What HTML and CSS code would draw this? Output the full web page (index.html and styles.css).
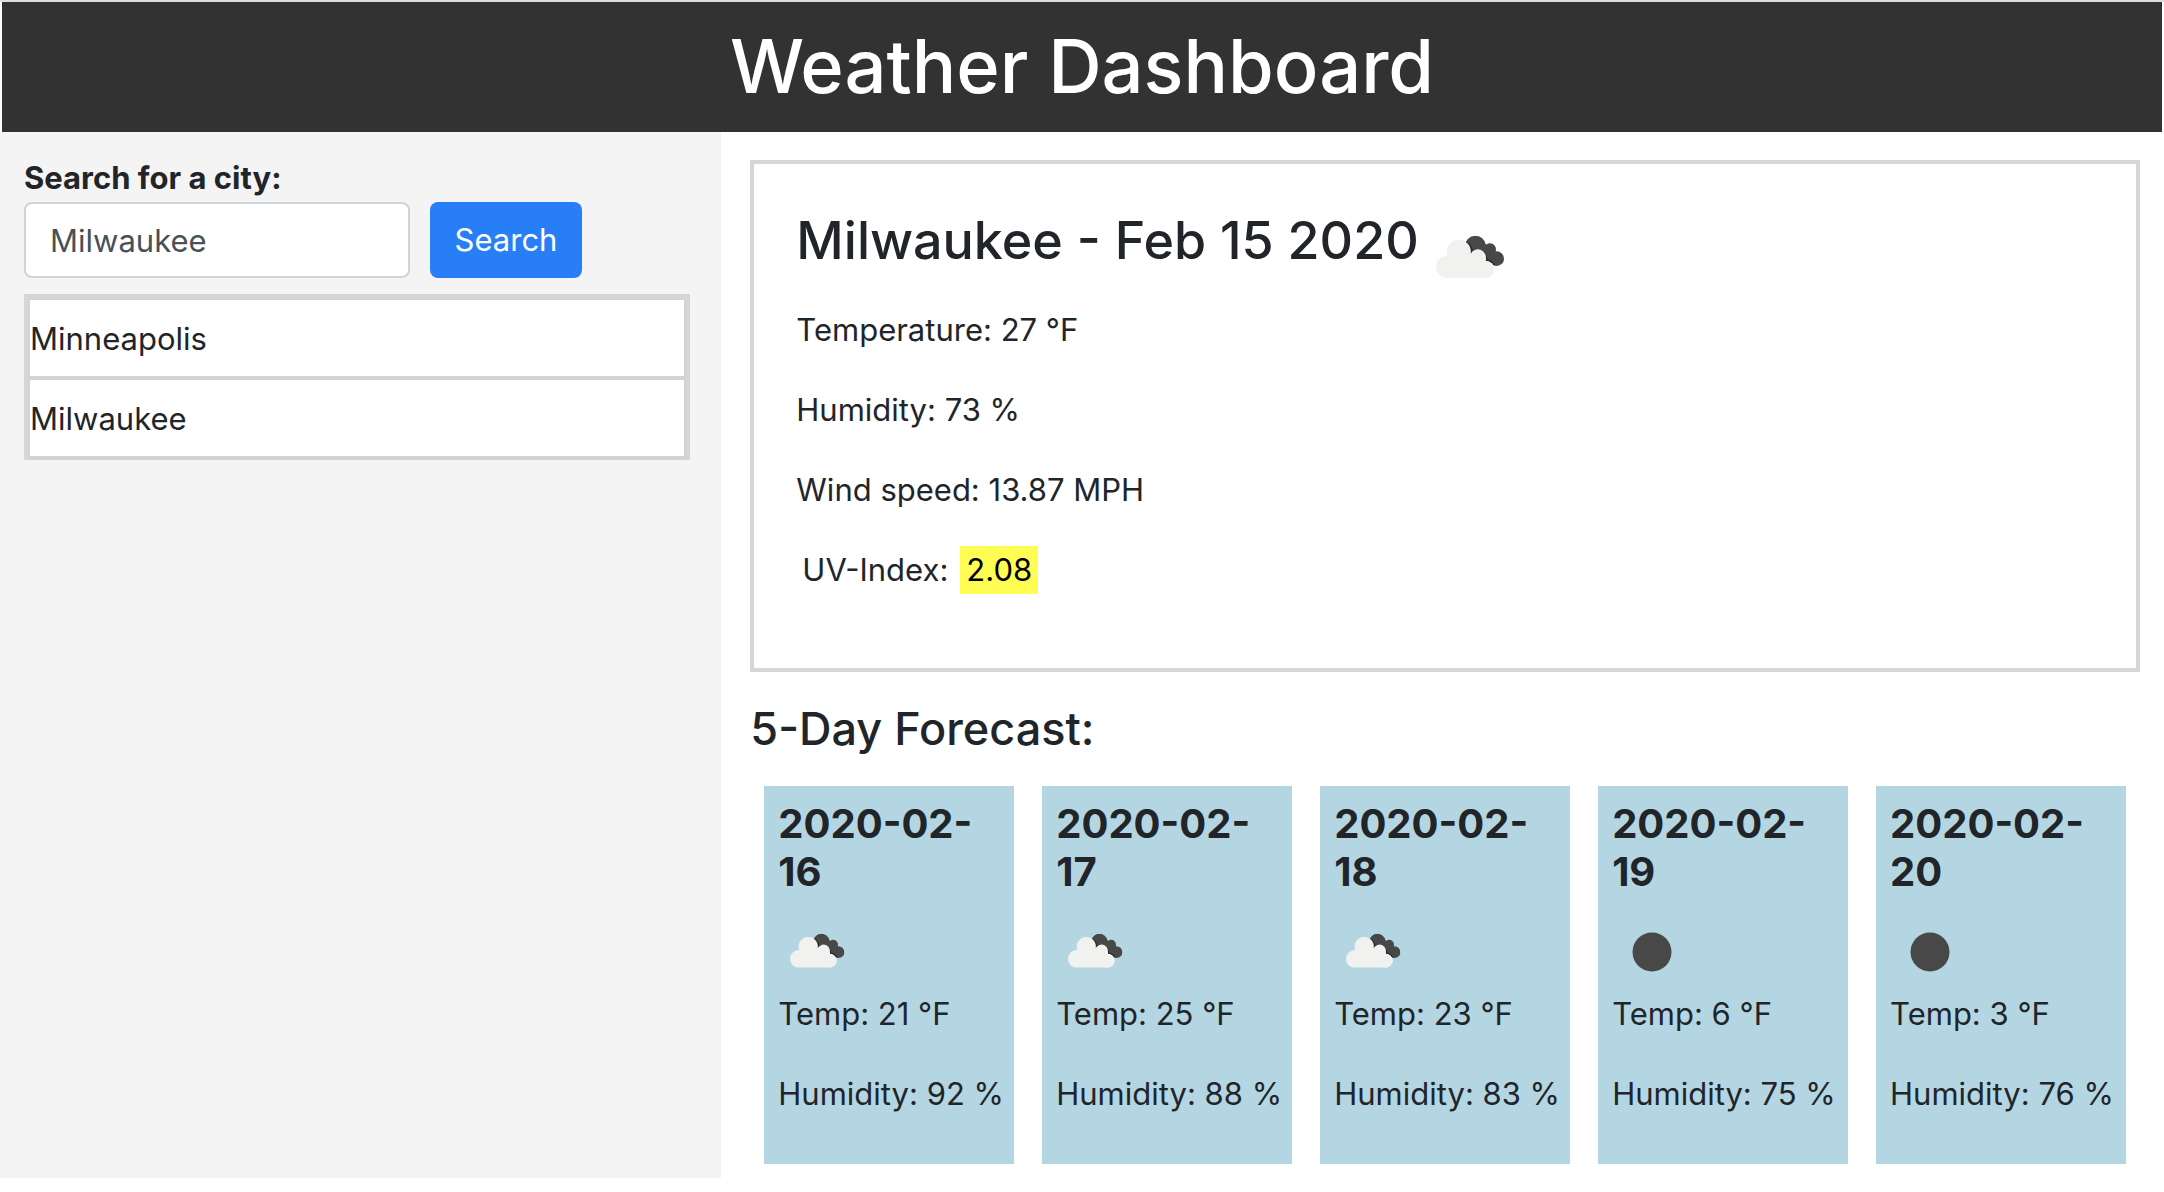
FILE: index.html
```html
<!DOCTYPE html>
<html lang="en">
<head>
<meta charset="utf-8">
<meta name="viewport" content="width=device-width, initial-scale=1">
<title>Weather Dashboard</title>
<link rel="stylesheet" href="styles.css">
</head>
<body>
<svg class="sprite" aria-hidden="true">
  <symbol id="broken-clouds" viewBox="12 -42 300 300">
    <clipPath id="back-cloud">
      <circle cx="175" cy="78" r="31"/>
      <circle cx="219" cy="88" r="18"/>
      <circle cx="239" cy="116" r="22"/>
      <path d="M170 100 L200 70 L225 80 L242 110 L225 135 Z"/>
    </clipPath>
    <g clip-path="url(#back-cloud)">
      <rect x="130" y="30" width="140" height="120" fill="#484849"/>
      <g fill="none" stroke="#2a2a2b" stroke-width="6">
        <circle cx="127" cy="99" r="38"/>
        <circle cx="181" cy="119" r="27"/>
        <circle cx="206" cy="148" r="28"/>
      </g>
    </g>
    <circle cx="181" cy="119" r="26" fill="#ffffff"/>
    <circle cx="206" cy="148" r="26" fill="#ffffff"/>
    <path fill="#f1f1ef" d="M88 174 A33 33 0 0 1 92 108 A36 36 0 1 1 161 101 A23 23 0 0 1 204 123 A25 25 0 0 1 207 174 Z"/>
  </symbol>
  <symbol id="scattered-clouds" viewBox="0 0 80 80">
    <circle cx="40" cy="42" r="19.5" fill="#484849"/>
  </symbol>
</svg>

<header class="banner">
  <h1>Weather Dashboard</h1>
</header>

<div class="layout">
  <aside class="sidebar">
    <form class="search">
      <label class="search-label" for="city">Search for a city:</label>
      <div class="search-row">
        <input class="search-input" id="city" type="text" value="Milwaukee">
        <button class="search-button" type="button">Search</button>
      </div>
    </form>
    <ul class="history">
      <li>Minneapolis</li>
      <li>Milwaukee</li>
    </ul>
  </aside>

  <main class="content">
    <section class="current">
      <h2 class="current-title">Milwaukee - Feb 15 2020
        <svg class="icon-large" role="img" aria-label="Broken clouds"><use href="#broken-clouds"/></svg>
      </h2>
      <p>Temperature: 27 °F</p>
      <p>Humidity: 73 %</p>
      <p>Wind speed: 13.87 MPH</p>
      <p class="uv"><span>UV-Index:</span><span class="uv-value">2.08</span></p>
    </section>

    <h3 class="forecast-title">5-Day Forecast:</h3>
    <section class="forecast">
      <article class="day">
        <h4>2020-02-16</h4>
        <svg class="icon-small" role="img" aria-label="Broken clouds"><use href="#broken-clouds"/></svg>
        <p>Temp: 21 °F</p>
        <p>Humidity: 92 %</p>
      </article>
      <article class="day">
        <h4>2020-02-17</h4>
        <svg class="icon-small" role="img" aria-label="Broken clouds"><use href="#broken-clouds"/></svg>
        <p>Temp: 25 °F</p>
        <p>Humidity: 88 %</p>
      </article>
      <article class="day">
        <h4>2020-02-18</h4>
        <svg class="icon-small" role="img" aria-label="Broken clouds"><use href="#broken-clouds"/></svg>
        <p>Temp: 23 °F</p>
        <p>Humidity: 83 %</p>
      </article>
      <article class="day">
        <h4>2020-02-19</h4>
        <svg class="icon-small" role="img" aria-label="Scattered clouds"><use href="#scattered-clouds"/></svg>
        <p>Temp: 6 °F</p>
        <p>Humidity: 75 %</p>
      </article>
      <article class="day">
        <h4>2020-02-20</h4>
        <svg class="icon-small" role="img" aria-label="Scattered clouds"><use href="#scattered-clouds"/></svg>
        <p>Temp: 3 °F</p>
        <p>Humidity: 76 %</p>
      </article>
    </section>
  </main>
</div>
</body>
</html>
```
FILE: styles.css
```css
* {
  box-sizing: border-box;
}

body {
  margin: 0;
  border-top: 2px solid #dcdde5;
  background: #ffffff;
  color: #212529;
  font-family: Inter, "Liberation Sans", sans-serif;
  font-size: 31px;
  line-height: 48px;
}

h1,
h2,
h3,
h4,
p,
ul {
  margin: 0;
}

p {
  margin-bottom: 32px;
}

.sprite {
  position: absolute;
  width: 0;
  height: 0;
}

.banner {
  margin: 0 2px;
  padding: 16px 0 18px;
  background: #323232;
  color: #ffffff;
  text-align: center;
}

.banner h1 {
  font-size: 74px;
  font-weight: 500;
  line-height: 96px;
}

.layout {
  display: grid;
  grid-template-columns: 1fr 2fr;
}

.sidebar {
  padding: 22px 31px 22px 24px;
  background: #f4f4f4;
}

.search-label {
  display: block;
  font-weight: 700;
}

.search-row {
  display: flex;
  gap: 20px;
}

.search-input,
.search-button {
  height: 76px;
  border-radius: 8px;
  font: inherit;
}

.search-input {
  width: 386px;
  min-width: 0;
  padding: 0 24px;
  border: 2px solid #ced4da;
  background: #ffffff;
  color: #495057;
}

.search-button {
  width: 152px;
  padding: 0;
  border: 0;
  background: #287ef7;
  color: #ffffff;
}

.history {
  margin-top: 16px;
  padding: 2px 2px 0;
  border: 4px solid #d6d6d6;
  border-bottom-width: 0;
  background: #d3d3d3;
  list-style: none;
}

.history li {
  padding: 15px 0 13px;
  border-bottom: 4px solid #d3d3d3;
  background: #ffffff;
}

.content {
  padding: 28px 24px 14px 29px;
}

.current {
  margin-bottom: 28px;
  padding: 42px;
  border: 4px solid #d6d6d6;
}

.current-title {
  display: flex;
  align-items: flex-start;
  gap: 2px;
  font-size: 52px;
  font-weight: 500;
  line-height: 70px;
}

.icon-large {
  width: 100px;
  height: 100px;
}

.uv {
  display: flex;
  gap: 12px;
  padding-left: 6px;
}

.uv-value {
  padding: 0 6px;
  background: #fffd54;
  color: #000000;
}

.forecast-title {
  margin-bottom: 28px;
  font-size: 45px;
  font-weight: 500;
  line-height: 58px;
}

.forecast {
  display: grid;
  grid-template-columns: repeat(5, minmax(0, 1fr));
  gap: 28px;
  padding: 0 14px;
}

.day {
  padding: 14px;
  background: #b4d6e2;
}

.day h4 {
  font-size: 40px;
  font-weight: 700;
  line-height: 48px;
}

.icon-small {
  display: block;
  width: 80px;
  height: 80px;
  margin-top: 14px;
}

.day p {
  white-space: nowrap;
}
```
